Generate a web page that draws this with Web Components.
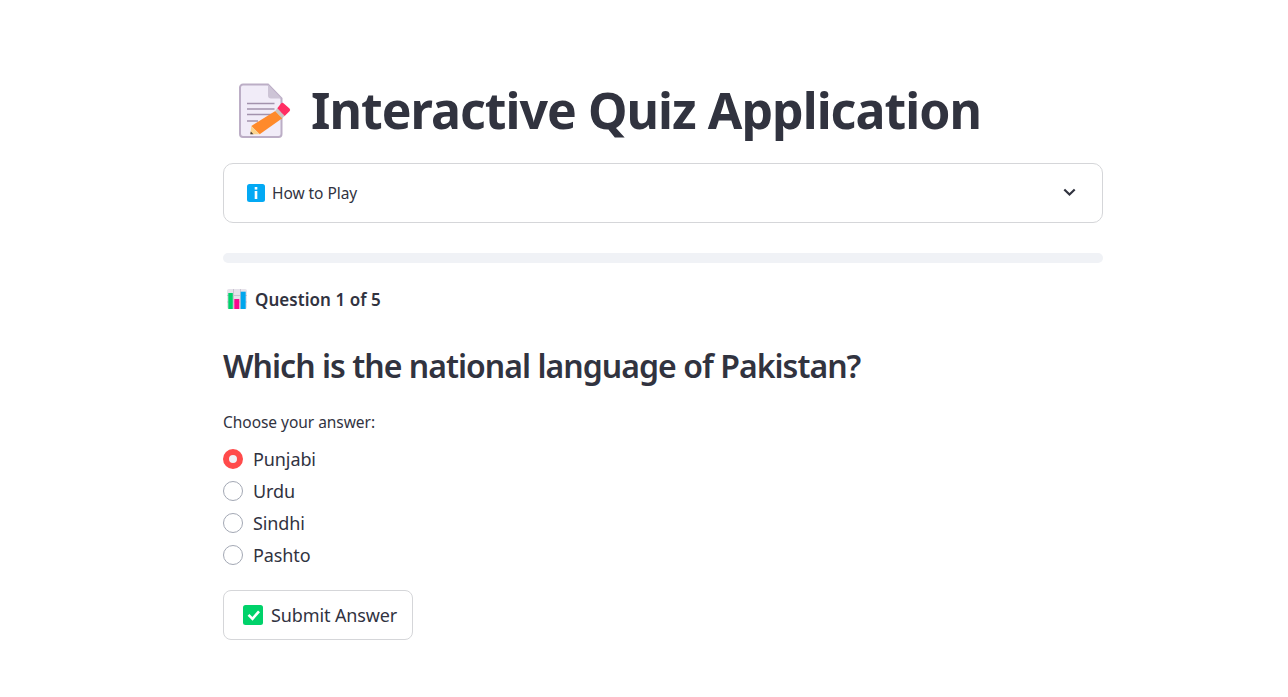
<!DOCTYPE html>
<html>
<head>
<meta charset="utf-8">
<title>Interactive Quiz Application</title>
<style>
  html, body { margin: 0; background: #fff; }
  body { font-family: "Noto Sans", "Lato", sans-serif; color: #31333f; }
</style>
</head>
<body>
<quiz-app>
  <quiz-title>Interactive Quiz Application</quiz-title>
  <quiz-expander>How to Play</quiz-expander>
  <quiz-progress></quiz-progress>
  <quiz-counter>Question 1 of 5</quiz-counter>
  <quiz-question>Which is the national language of Pakistan?</quiz-question>
  <quiz-radios label="Choose your answer:" options="Punjabi,Urdu,Sindhi,Pashto" selected="0"></quiz-radios>
  <quiz-submit>Submit Answer</quiz-submit>
</quiz-app>

<script>
const FONT = `"Noto Sans", "Lato", sans-serif`;

// Main column of the page
class QuizApp extends HTMLElement {
  connectedCallback() {
    const shadow = this.attachShadow({ mode: "open" });
    shadow.innerHTML = `
      <style>
        :host {
          display: flex;
          flex-direction: column;
          width: 880px;
          height: 697px;
          box-sizing: border-box;
          margin-left: 223px;
          padding-top: 78px;
          font-family: ${FONT};
          color: #31333f;
        }
      </style>
      <slot></slot>
    `;
  }
}

// Page heading with the memo emoji
class QuizTitle extends HTMLElement {
  connectedCallback() {
    const shadow = this.attachShadow({ mode: "open" });
    shadow.innerHTML = `
      <style>
        :host { display: flex; align-items: center; gap: 19px; height: 65px; padding-left: 15px; margin-bottom: 20px; }
        svg { width: 54px; height: 56px; flex: none; }
        h1 { margin: 0; font-size: 50px; font-weight: 700; line-height: 65px; letter-spacing: -.97px; white-space: nowrap; }
      </style>
      <svg viewBox="0 0 54 56">
        <path d="M5 1.500h25l13.500 14v35.500a3 3 0 0 1-3 3H5a3 3 0 0 1-3-3v-46.500a3 3 0 0 1 3-3z" fill="#f1ecf8" stroke="#bcaec6" stroke-width="2"/>
        <path d="M30 1.500l13.500 14H33a3 3 0 0 1-3-3z" fill="#cdc4d6"/>
        <path d="M9 20.500h27.500M9 26h27.500M9 31.500h27.500M9 38h11" stroke="#a392ad" stroke-width="1.600"/>
        <path d="M37.300 28l7 7.300-22.600 16-8.400-8.300z" fill="#ff8a2b"/>
        <path d="M39.300 25.300l7.400 7.700-2.400 2.300-7-7.300z" fill="#c9c6c2"/>
        <path d="M43 20.500a2 2 0 0 1 2.800 0l5.700 5a2 2 0 0 1 0 2.800l-4.800 4.700-7.400-7.700z" fill="#ff2e63"/>
        <path d="M13.300 43l8.400 8.300-9.400 0z" fill="#fbd38d"/>
        <path d="M12.800 48.500l2.700 2.800h-3.200z" fill="#4a3f35"/>
      </svg>
      <h1><slot></slot></h1>
    `;
  }
}

// Collapsed expander box
class QuizExpander extends HTMLElement {
  connectedCallback() {
    const shadow = this.attachShadow({ mode: "open" });
    shadow.innerHTML = `
      <style>
        :host {
          display: flex; align-items: center; height: 60px; box-sizing: border-box;
          padding: 0 23px; border: 1px solid #d5d6d9; border-radius: 10px;
          font-size: 15.500px; letter-spacing: -.05px;
        }
        .icon { width: 18px; height: 18px; flex: none; margin-right: 7px; }
        .label { flex: 1; }
        .chevron { width: 20px; height: 20px; flex: none; }
      </style>
      <svg class="icon" viewBox="0 0 18 18">
        <rect width="18" height="18" rx="2.500" fill="#03a9f4"/>
        <rect x="7.700" y="3" width="2.600" height="2.600" fill="#fff"/>
        <rect x="7.700" y="7" width="2.600" height="8" fill="#fff"/>
      </svg>
      <span class="label"><slot></slot></span>
      <svg class="chevron" viewBox="0 0 20 20">
        <path d="M5.300 6.500l5.200 5 5.200-5" fill="none" stroke="#31333f" stroke-width="2.200"/>
      </svg>
    `;
  }
}

// Empty progress track
class QuizProgress extends HTMLElement {
  connectedCallback() {
    const shadow = this.attachShadow({ mode: "open" });
    shadow.innerHTML = `
      <style>
        :host { display: block; height: 10px; margin-top: 30px; background: #f0f2f6; border-radius: 5px; }
      </style>
    `;
  }
}

// Bold counter with chart emoji
class QuizCounter extends HTMLElement {
  connectedCallback() {
    const shadow = this.attachShadow({ mode: "open" });
    shadow.innerHTML = `
      <style>
        :host { display: flex; align-items: center; gap: 8px; height: 24px; margin-top: 24px; padding-left: 4px; font-size: 17px; font-weight: 600; letter-spacing: .05px; }
        svg { width: 20px; height: 20px; flex: none; }
      </style>
      <svg viewBox="0 0 20 20">
        <rect width="20" height="20" rx="2" fill="#e6e2ea"/>
        <path d="M0 6.500h20M0 13h20M6.500 0v20M13.500 0v20" stroke="#c9c3d0" stroke-width="1"/>
        <rect x="1.300" y="4" width="4.500" height="16" fill="#00d26a"/>
        <rect x="7.300" y="10" width="5" height="10" fill="#f70a8d"/>
        <rect x="13.700" y="2.700" width="5" height="17.300" fill="#00a6ed"/>
      </svg>
      <span><slot></slot></span>
    `;
  }
}

// Question heading
class QuizQuestion extends HTMLElement {
  connectedCallback() {
    const shadow = this.attachShadow({ mode: "open" });
    shadow.innerHTML = `
      <style>
        h2 { margin: 0; font-size: 32px; font-weight: 600; line-height: 44px; letter-spacing: -.97px; white-space: nowrap; }
        :host { display: block; margin-top: 33px; }
      </style>
      <h2><slot></slot></h2>
    `;
  }
}

// Radio group, options come from the attribute
class QuizRadios extends HTMLElement {
  connectedCallback() {
    const shadow = this.attachShadow({ mode: "open" });
    const selected = Number(this.getAttribute("selected"));
    shadow.innerHTML = `
      <style>
        :host { display: block; margin-top: 22px; }
        .label { font-size: 15.500px; line-height: 24px; letter-spacing: -.04px; margin-bottom: 11px; }
        .options { display: flex; flex-direction: column; gap: 4px; }
        .option { display: flex; align-items: center; gap: 10px; height: 28px; font-size: 18px; letter-spacing: -.1px; }
        .dot { width: 20px; height: 20px; box-sizing: border-box; border-radius: 50%; border: 1px solid #a3a8b4; background: #fff; flex: none; }
        .on { border: 6px solid #ff4b4b; background: #f0f2f6; }
      </style>
      <div class="label">${this.getAttribute("label")}</div>
      <div class="options"></div>
    `;

    const options = shadow.querySelector(".options");
    this.getAttribute("options").split(",").forEach((name, i) => {
      const row = document.createElement("div");
      row.className = "option";
      const dot = document.createElement("span");
      dot.className = i === selected ? "dot on" : "dot";
      const text = document.createElement("span");
      text.textContent = name;
      row.append(dot, text);
      options.appendChild(row);
    });
  }
}

// Submit button with check emoji
class QuizSubmit extends HTMLElement {
  connectedCallback() {
    const shadow = this.attachShadow({ mode: "open" });
    shadow.innerHTML = `
      <style>
        :host {
          display: flex; align-items: center; align-self: flex-start; gap: 8px; height: 50px; width: 190px;
          box-sizing: border-box; margin-top: 21px; padding-left: 19px;
          border: 1px solid #d5d6d9; border-radius: 8px; font-size: 18px; letter-spacing: -.12px; white-space: nowrap;
        }
        svg { width: 20px; height: 20px; flex: none; }
      </style>
      <svg viewBox="0 0 20 20">
        <rect width="20" height="20" rx="2.500" fill="#00d26a"/>
        <path d="M5.500 9.800l4 4 6.500-7.500" fill="none" stroke="#fff" stroke-width="2.600"/>
      </svg>
      <span><slot></slot></span>
    `;
  }
}

customElements.define("quiz-app", QuizApp);
customElements.define("quiz-title", QuizTitle);
customElements.define("quiz-expander", QuizExpander);
customElements.define("quiz-progress", QuizProgress);
customElements.define("quiz-counter", QuizCounter);
customElements.define("quiz-question", QuizQuestion);
customElements.define("quiz-radios", QuizRadios);
customElements.define("quiz-submit", QuizSubmit);
</script>
</body>
</html>
